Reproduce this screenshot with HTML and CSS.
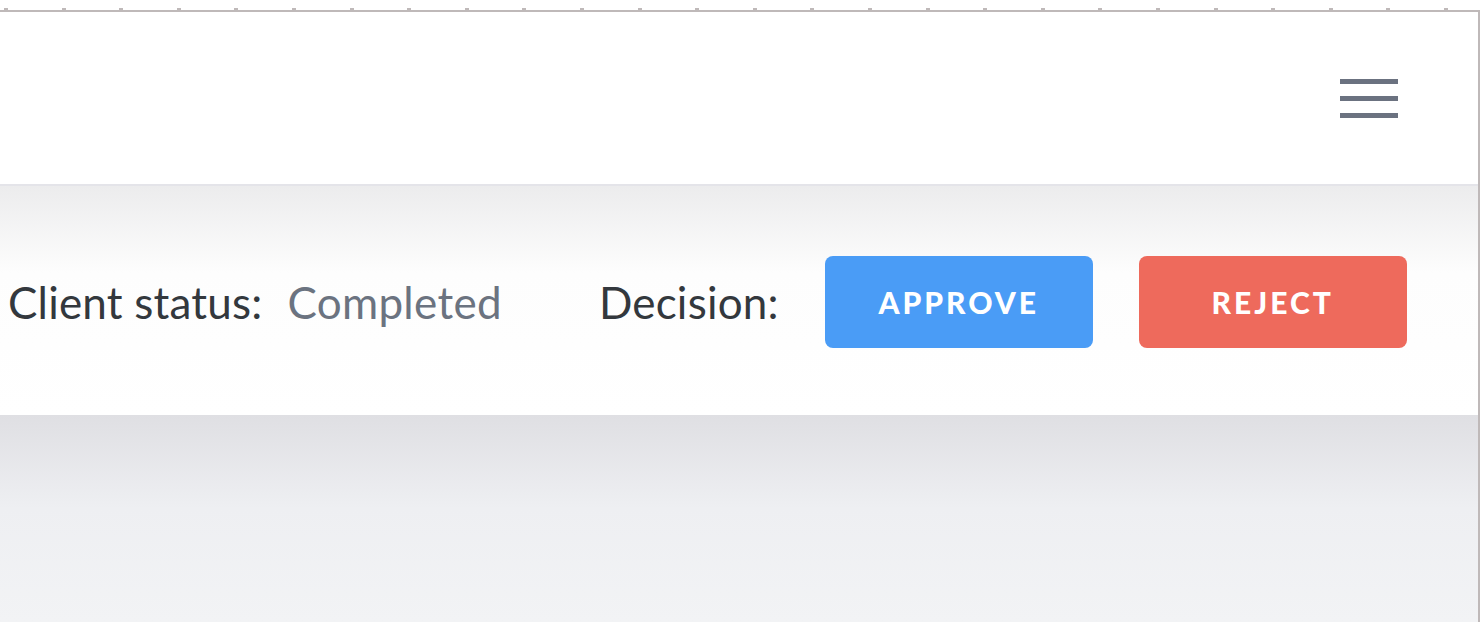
FILE: index.html
```html
<!DOCTYPE html>
<html lang="en">
<head>
    <meta charset="UTF-8">
    <meta name="viewport" content="width=device-width, initial-scale=1.0">
    <title>Client review</title>
    <link rel="stylesheet" href="styles.css">
</head>
<body>
    <div class="ruler"></div>
    <div class="frame">
        <div class="header">
            <a href="#" class="menu-button" aria-label="Menu">
                <span></span>
                <span></span>
                <span></span>
            </a>
        </div>

        <div class="status-bar">
            <span class="label">Client status:</span>
            <span class="value">Completed</span>
            <span class="label decision">Decision:</span>
            <button class="btn btn-approve">APPROVE</button>
            <button class="btn btn-reject">REJECT</button>
        </div>

        <div class="content">
            <!-- Client details go here -->
        </div>
    </div>
</body>
</html>
```

FILE: styles.css
```css
body {
    font-family: Lato, "Open Sans", sans-serif;
    background-color: #fff;
    margin: 0;
    height: 622px;
    overflow: hidden;
    display: flex;
    flex-direction: column;
}
.ruler {
    height: 10px;
    padding-left: 2px;
    background-image: repeating-linear-gradient(to right, #bfb9b9 0, #bfb9b9 4px, transparent 4px, transparent 57.6px);
    background-size: 100% 2px;
    background-position: 2px 8px;
    background-repeat: no-repeat;
    background-origin: content-box;
}
.frame {
    flex: 1;
    display: flex;
    flex-direction: column;
    border-top: 2px solid #bfb9b9;
    border-right: 2px solid #bfb9b9;
}
.header {
    height: 172px;
    background-color: #fff;
    border-bottom: 2px solid #e4e4e9;
    display: flex;
    align-items: center;
    justify-content: flex-end;
    padding-right: 80px;
}
.menu-button {
    display: flex;
    flex-direction: column;
    gap: 12px;
    width: 58px;
}
.menu-button span {
    display: block;
    height: 5px;
    background-color: #6b7280;
}
.status-bar {
    height: 226px;
    padding-top: 3px;
    display: flex;
    align-items: center;
    padding-left: 8px;
    background: linear-gradient(to bottom, #ececed 0, #fdfdfd 38%, #fff 100%);
}
.label {
    font-size: 44px;
    letter-spacing: 0.2px;
    color: #33383d;
}
.value {
    font-size: 44px;
    letter-spacing: 0.3px;
    color: #6b7380;
    margin-left: 25px;
}
.decision {
    margin-left: 97px;
}
.btn {
    width: 268px;
    height: 92px;
    border: none;
    border-radius: 8px;
    color: #fff;
    font-family: Lato, "Open Sans", sans-serif;
    font-size: 30px;
    font-weight: 900;
    letter-spacing: 3px;
    cursor: pointer;
}
.btn-approve {
    background-color: #4a9cf6;
    margin-left: 46px;
}
.btn-reject {
    background-color: #ee6a5c;
    margin-left: 46px;
}
.content {
    flex: 1;
    background: linear-gradient(to bottom, #dfdfe3 0, #eeeff2 45%, #f2f3f5 100%);
}
```
